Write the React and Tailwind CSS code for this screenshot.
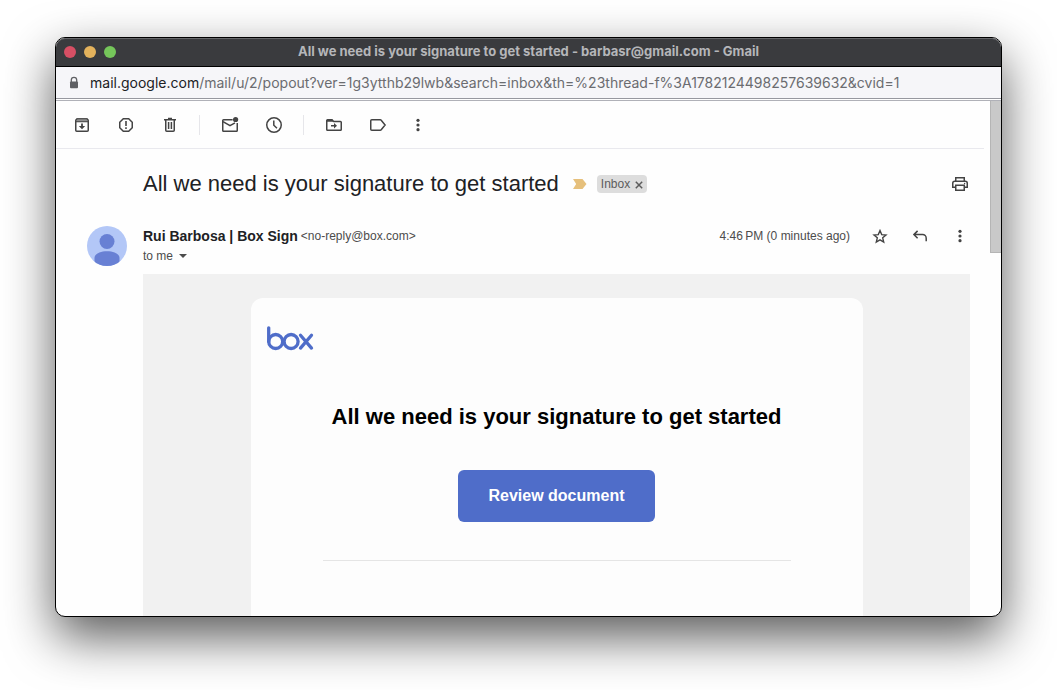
const ICON = "h-5 w-5 fill-none stroke-[#444444] stroke-[1.5]";

function Archive() {
  return (
    <svg viewBox="0 0 20 20" className={ICON}>
      <path d="M3.75 6.2v9c0 .6.4 1 1 1h10.5c.6 0 1-.4 1-1v-9" />
      <path d="M3 6.9V5l1.7-2h10.6L17 5v1.9z" fill="#8f8f8f" stroke="none" />
      <path d="M3.75 7V5.2l1.3-1.45h9.9l1.3 1.45V7M3 6.75h14" strokeWidth="1.2" />
      <path d="M10 8.5v3" strokeWidth="1.8" />
      <path d="M6.8 11h6.4L10 14.2z" fill="#444444" stroke="none" />
    </svg>
  );
}

function Report() {
  return (
    <svg viewBox="0 0 20 20" className={ICON}>
      <path d="M7.3 3.75h5.4l3.55 3.55v5.4l-3.55 3.55H7.3L3.75 12.7V7.3z" />
      <path d="M10 6v5M10 12.3v1.7" strokeWidth="1.6" />
    </svg>
  );
}

function Trash() {
  return (
    <svg viewBox="0 0 20 20" className={ICON}>
      <path d="M4 4.75h12M8 3.6h4" />
      <path d="M5.75 5v10.2c0 .6.4 1 1 1h6.5c.6 0 1-.4 1-1V5M8.6 7v7M11.4 7v7" />
    </svg>
  );
}

function MailUnread() {
  return (
    <svg viewBox="0 0 20 20" className={ICON}>
      <path d="M12.6 4.75H3.6c-.5 0-.85.35-.85.85v9.8c0 .5.35.85.85.85h12.8c.5 0 .85-.35.85-.85V8" />
      <path d="M3 6.6l7 4.1 5-2.9" />
      <circle cx="15.6" cy="4.5" r="2.6" fill="#444444" stroke="none" />
    </svg>
  );
}

function Clock() {
  return (
    <svg viewBox="0 0 20 20" className={ICON}>
      <circle cx="10" cy="10" r="7.25" />
      <path d="M9.8 5.5v4.8l3.2 3" />
    </svg>
  );
}

function MoveTo() {
  return (
    <svg viewBox="0 0 20 20" className={ICON}>
      <path d="M2.75 5.6v8.8c0 .5.35.85.85.85h12.8c.5 0 .85-.35.85-.85V7.3c0-.5-.35-.85-.85-.85H9.7L8 4.75H3.6c-.5 0-.85.35-.85.85z" />
      <path d="M3 4.5h5l2 2.2H3z" fill="#444444" stroke="none" />
      <path d="M7 10.8h4" />
      <path d="M10 8l3 2.8-3 2.8z" fill="#444444" stroke="none" />
    </svg>
  );
}

function Label() {
  return (
    <svg viewBox="0 0 20 20" className={ICON}>
      <path d="M3.75 4.75h8.5c.4 0 .7.15.95.45l3.9 4.8-3.9 4.8c-.25.3-.55.45-.95.45h-8.5c-.6 0-1-.4-1-1v-8.5c0-.6.4-1 1-1z" />
    </svg>
  );
}

function More() {
  return (
    <svg viewBox="0 0 20 20" className="h-5 w-5 fill-[#444444]">
      <circle cx="10" cy="5.3" r="1.6" />
      <circle cx="10" cy="10" r="1.6" />
      <circle cx="10" cy="14.7" r="1.6" />
    </svg>
  );
}

function Printer() {
  return (
    <svg viewBox="0 0 20 20" className={ICON}>
      <path d="M5.75 7V3.75h8.5V7" />
      <path d="M5.5 13.25H2.75V9.2c0-1.2.9-2 2-2h10.5c1.1 0 2 .8 2 2v4.05H14.5" />
      <path d="M5.75 11.25h8.5v5h-8.5z" />
      <circle cx="14.6" cy="9.5" r=".7" fill="#444444" stroke="none" />
    </svg>
  );
}

function Star() {
  return (
    <svg viewBox="0 0 20 20" className={ICON}>
      <path d="M10 4.6l1.7 4 4.3.4-3.3 2.8 1 4.2-3.7-2.2L6.3 16l1-4.2L4 9l4.3-.4z" strokeWidth="1.4" />
    </svg>
  );
}

function Reply() {
  return (
    <svg viewBox="0 0 20 20" className={ICON}>
      <path d="M7.6 4.9L3.9 8.6l3.7 3.7M4 8.6h8.6c2 0 3.6 1.6 3.6 3.6v3" />
    </svg>
  );
}

function IconButton({ label, children }) {
  return (
    <button type="button" aria-label={label} className="flex h-5 w-5 shrink-0 items-center justify-center">
      {children}
    </button>
  );
}

function Separator() {
  return <span className="mr-5 ml-[19px] h-5 w-px bg-[#e6e6ea]" />;
}

function BoxLogo() {
  return (
    <svg viewBox="0 0 48 26" role="img" aria-label="Box" className="h-[26px] w-12 fill-none stroke-[#4f6dc9] stroke-[3.3]" strokeLinecap="round">
      <path d="M1.7 2.8v13.600" />
      <circle cx="8.700" cy="16.500" r="7" />
      <circle cx="24.100" cy="16.500" r="7" />
      <path d="M33.500 10.200l11 12.900M44.500 10.200l-11 12.900" />
    </svg>
  );
}

function TitleBar() {
  return (
    <header className="relative flex h-[29px] items-center justify-center rounded-t-[9px] border-b border-black bg-[#3a3b3e] shadow-[inset_0_1px_0_#66676a]">
      <div className="absolute left-2 flex gap-2">
        <button type="button" aria-label="Close" className="h-3 w-3 rounded-full bg-[#d74f64]" />
        <button type="button" aria-label="Minimize" className="h-3 w-3 rounded-full bg-[#e3b25c]" />
        <button type="button" aria-label="Zoom" className="h-3 w-3 rounded-full bg-[#75c65a]" />
      </div>
      <h1 className="font-['Inter','Liberation_Sans',sans-serif] text-[13px] font-bold text-[#b5b6b9]">
        All we need is your signature to get started - barbasr@gmail.com - Gmail
      </h1>
    </header>
  );
}

function AddressBar() {
  return (
    <div className="flex h-8 items-center border-b border-[#97989f] bg-[#f6f6f9] pl-3 font-['Inter','Liberation_Sans',sans-serif] text-[14px] text-[#6b6c70]">
      <svg viewBox="0 0 12 14" className="mr-2.5 h-3.5 w-3">
        <path d="M3.3 6V4a2.7 2.7 0 015.4 0v2" fill="none" stroke="#5f6064" strokeWidth="1.3" />
        <rect x="2" y="5.5" width="8" height="6.8" rx="1" fill="#5f6064" />
      </svg>
      <p className="whitespace-nowrap">
        <span className="text-[#202124]">mail.google.com</span>
        /mail/u/2/popout?ver=1g3ytthb29lwb&amp;search=inbox&amp;th=%23thread-f%3A1782124498257639632&amp;cvid=1
      </p>
    </div>
  );
}

function Toolbar() {
  return (
    <div className="mr-1.5 flex h-12 shrink-0 items-center border-b border-[#e9e9ee] pl-4">
      <div className="flex gap-6">
        <IconButton label="Archive"><Archive /></IconButton>
        <IconButton label="Report spam"><Report /></IconButton>
        <IconButton label="Delete"><Trash /></IconButton>
      </div>
      <Separator />
      <div className="flex gap-6">
        <IconButton label="Mark as unread"><MailUnread /></IconButton>
        <IconButton label="Snooze"><Clock /></IconButton>
      </div>
      <Separator />
      <div className="mr-5 flex gap-6">
        <IconButton label="Move to"><MoveTo /></IconButton>
        <IconButton label="Labels"><Label /></IconButton>
      </div>
      <IconButton label="More"><More /></IconButton>
    </div>
  );
}

function Subject() {
  return (
    <div className="flex h-6 items-center pl-14">
      <h2 className="text-[22px] leading-6 whitespace-nowrap text-[#202124]">All we need is your signature to get started</h2>
      <svg viewBox="0 0 14 10" aria-label="Important" className="ml-3.5 h-2.5 w-3.5">
        <path d="M0 0h9.5L13.5 5l-4 5H0l3.2-5z" fill="#e6c07c" />
      </svg>
      <span className="ml-2.5 flex h-[18px] items-center gap-[5px] rounded bg-[#dddddd] px-1 text-[12px] text-[#5c5c5c]">
        Inbox
        <button type="button" aria-label="Remove label Inbox" className="pt-0.5">
          <svg viewBox="0 0 8 8" className="h-2 w-2">
            <path d="M.8.8l6.4 6.4M7.2.8L.8 7.2" stroke="#5c5c5c" strokeWidth="1.5" />
          </svg>
        </button>
      </span>
      <div className="ml-auto">
        <IconButton label="Print"><Printer /></IconButton>
      </div>
    </div>
  );
}

function Sender() {
  return (
    <div className="mt-[30px] flex">
      <svg viewBox="0 0 40 40" role="img" aria-label="Rui Barbosa" className="mr-4 h-10 w-10 shrink-0">
        <clipPath id="avatar"><circle cx="20" cy="20" r="20" /></clipPath>
        <g clipPath="url(#avatar)">
          <path d="M0 0h40v40H0z" fill="#b3c7f7" />
          <circle cx="20" cy="15.5" r="7.5" fill="#6880d4" />
          <path d="M7.500 40v-8c0-4 5.500-6.700 12.500-6.700s12.500 2.700 12.500 6.700v8z" fill="#6880d4" />
        </g>
      </svg>
      <div className="min-w-0 flex-1">
        <div className="flex h-5 items-center text-[12px] text-[#4c4c4c]">
          <strong className="text-[14px] text-[#202124]">Rui Barbosa | Box Sign</strong>
          <span className="ml-[3px]">&lt;no-reply@box.com&gt;</span>
          <time className="mr-5 ml-auto">4:46&#8239;PM (0 minutes ago)</time>
          <div className="flex gap-5">
            <IconButton label="Star"><Star /></IconButton>
            <IconButton label="Reply"><Reply /></IconButton>
            <IconButton label="More"><More /></IconButton>
          </div>
        </div>
        <button type="button" className="flex h-5 items-center gap-1.5 text-[12px] text-[#4c4c4c]">
          to me
          <svg viewBox="0 0 8 4" className="h-1 w-2"><path d="M0 0h8L4 4z" fill="#4c4c4c" /></svg>
        </button>
      </div>
    </div>
  );
}

function EmailBody() {
  return (
    <div className="mt-2 ml-14 flex flex-1 justify-center bg-[#f1f1f1] pt-6">
      <article className="w-[612px] rounded-t-xl bg-[#fdfdfd] px-4 pt-[27px]">
        <BoxLogo />
        <div className="mx-14 text-center">
          <h3 className="mt-[54px] text-[22px] leading-6 font-bold whitespace-nowrap text-black">
            All we need is your signature to get started
          </h3>
          <button type="button" className="mt-[41px] h-[52px] rounded-md bg-[#4f6dc9] px-[30px] text-[16px] font-bold text-white">
            Review document
          </button>
          <hr className="mt-[38px] border-[#e5e5e5]" />
        </div>
      </article>
    </div>
  );
}

export default function App() {
  return (
    <main className="flex h-screen flex-col bg-white px-[55px] pt-[37px] pb-[73px] font-['Liberation_Sans',Arial,sans-serif]">
      <section className="flex min-h-0 flex-1 flex-col overflow-hidden rounded-[10px] border border-black bg-[#fefefe] shadow-[0_20px_50px_rgba(0,0,0,0.65)]">
        <TitleBar />
        <AddressBar />
        <div className="mt-px flex min-h-0 flex-1 border-t border-[#b0b1b8]">
          <div className="flex min-w-0 flex-1 flex-col">
            <Toolbar />
            <div className="flex flex-1 flex-col pt-[23px] pr-5 pl-[31px]">
              <Subject />
              <Sender />
              <EmailBody />
            </div>
          </div>
          <div className="w-[11px]">
            <div className="h-[152px] border-b border-l border-[#b5b5b5] bg-[#c9c9c9]" />
          </div>
        </div>
      </section>
    </main>
  );
}
